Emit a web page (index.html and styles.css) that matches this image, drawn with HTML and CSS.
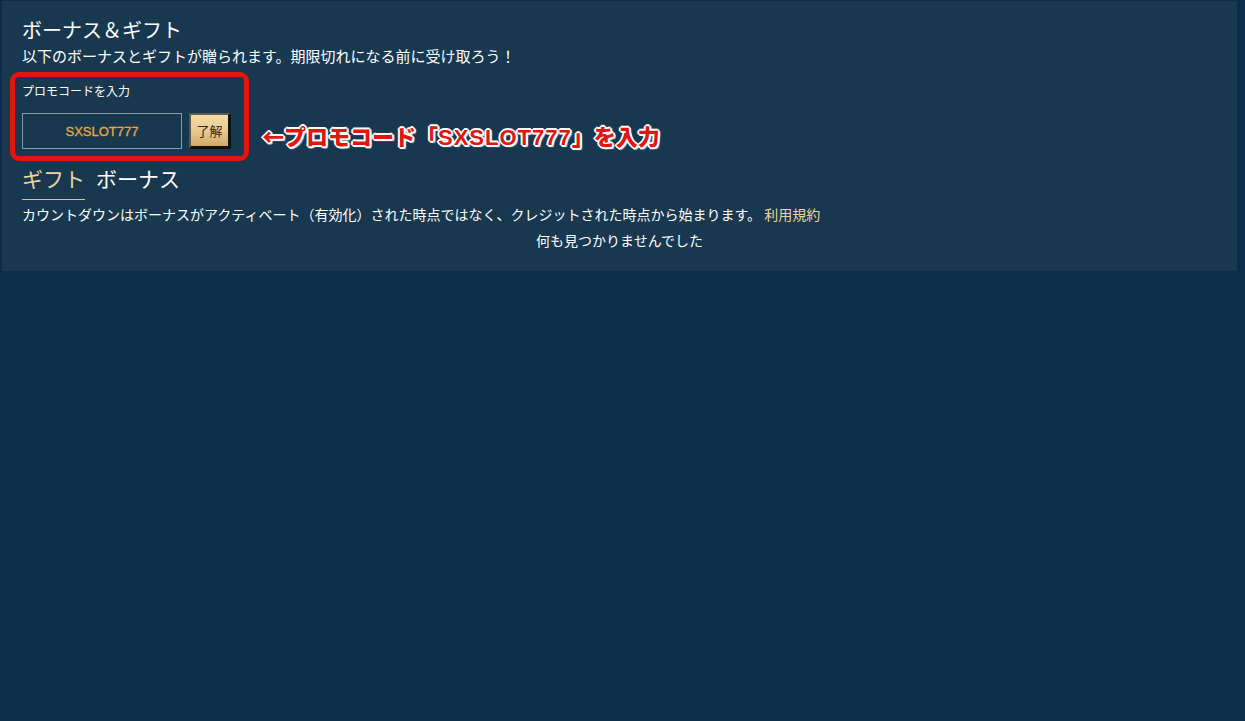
FILE: index.html
```html
<!DOCTYPE html>
<html lang="ja">
<head>
<meta charset="utf-8">
<title>ボーナス&ギフト</title>
<link rel="stylesheet" href="styles.css">
</head>
<body>
<div class="panel">
  <h1 class="title">ボーナス＆ギフト</h1>
  <p class="subtitle">以下のボーナスとギフトが贈られます。期限切れになる前に受け取ろう！</p>
  <div class="promo">
    <div class="promo-label">プロモコードを入力</div>
    <div class="promo-row">
      <div class="promo-input">SXSLOT777</div>
      <button class="promo-btn">了解</button>
    </div>
  </div>
  <div class="highlight-box"></div>
  <div class="annotation">←プロモコード「<span class="latin">SXSLOT777</span>」を入力</div>
  <div class="tabs">
    <span class="tab active">ギフト</span>
    <span class="tab">ボーナス</span>
  </div>
  <div class="tab-line"></div>
  <p class="desc">カウントダウンはボーナスがアクティベート（有効化）された時点ではなく、クレジットされた時点から始まります。 <span class="link">利用規約</span></p>
  <p class="empty">何も見つかりませんでした</p>
</div>
</body>
</html>
```

FILE: styles.css
```css
html, body {
  margin: 0;
  padding: 0;
}
body {
  background: #0c2d4a;
  font-family: "Noto Sans CJK JP", "Noto Sans", sans-serif;
  color: #ffffff;
  width: 1245px;
  height: 721px;
  overflow: hidden;
}
.panel {
  position: relative;
  margin: 1px 8px 0 2px;
  background: #183850;
  padding: 17px 20px 21px 20px;
}
.title {
  margin: 0;
  font-size: 20px;
  line-height: 24px;
  font-weight: normal;
}
.subtitle {
  margin: 3px 0 0 0;
  font-size: 15px;
  line-height: 22px;
}
.promo {
  margin-top: 16px;
}
.promo-label {
  font-size: 12px;
  line-height: 16px;
}
.promo-row {
  display: flex;
  margin-top: 14px;
  height: 36px;
}
.promo-input {
  box-sizing: border-box;
  width: 160px;
  height: 36px;
  border: 1px solid #8a9aa8;
  display: flex;
  align-items: center;
  justify-content: center;
  font-family: "Liberation Sans", Arial, sans-serif;
  font-size: 13px;
  color: #eaa93a;
  -webkit-text-stroke: 0.3px #eaa93a;
}
.promo-btn {
  box-sizing: border-box;
  margin-left: 7px;
  width: 42px;
  height: 36px;
  padding: 0;
  border-style: solid;
  border-width: 2px 3px 3px 2px;
  border-color: #5a5a50 #111 #111 #5a5a50;
  background: linear-gradient(180deg, #f3dca6 0%, #e9cc8c 50%, #cfa96a 100%);
  font-family: "Noto Sans CJK JP", sans-serif;
  font-size: 13px;
  color: #2a2a2a;
}
.highlight-box {
  position: absolute;
  left: 8px;
  top: 71px;
  width: 229px;
  height: 79px;
  border: 5px solid #e3150f;
  border-radius: 9px;
}
.annotation {
  position: absolute;
  left: 260px;
  top: 120px;
  font-size: 22px;
  line-height: 28px;
  font-weight: 900;
  color: #e3150f;
  letter-spacing: 0;
  text-shadow:
    -1px -1px 0 #fff, 1px -1px 0 #fff, -1px 1px 0 #fff, 1px 1px 0 #fff,
    0 -2px 0 #fff, 0 2px 0 #fff, -2px 0 0 #fff, 2px 0 0 #fff,
    2px 2px 1px #e6e6e6;
}
.annotation .latin {
  font-family: "Liberation Sans", Arial, sans-serif;
  font-weight: bold;
  letter-spacing: 1px;
}
.tabs {
  margin-top: 16px;
  display: flex;
  gap: 11px;
  font-size: 21px;
  line-height: 26px;
}
.tab.active {
  color: #edd49c;
}
.tab-line {
  margin-top: 8px;
  width: 63px;
  height: 1px;
  background: #d9c28e;
}
.desc {
  margin: 4px 0 0 0;
  font-size: 14px;
  line-height: 20px;
}
.link {
  color: #edd49c;
}
.empty {
  margin: 6px 0 0 0;
  font-size: 14px;
  line-height: 20px;
  text-align: center;
}
```
